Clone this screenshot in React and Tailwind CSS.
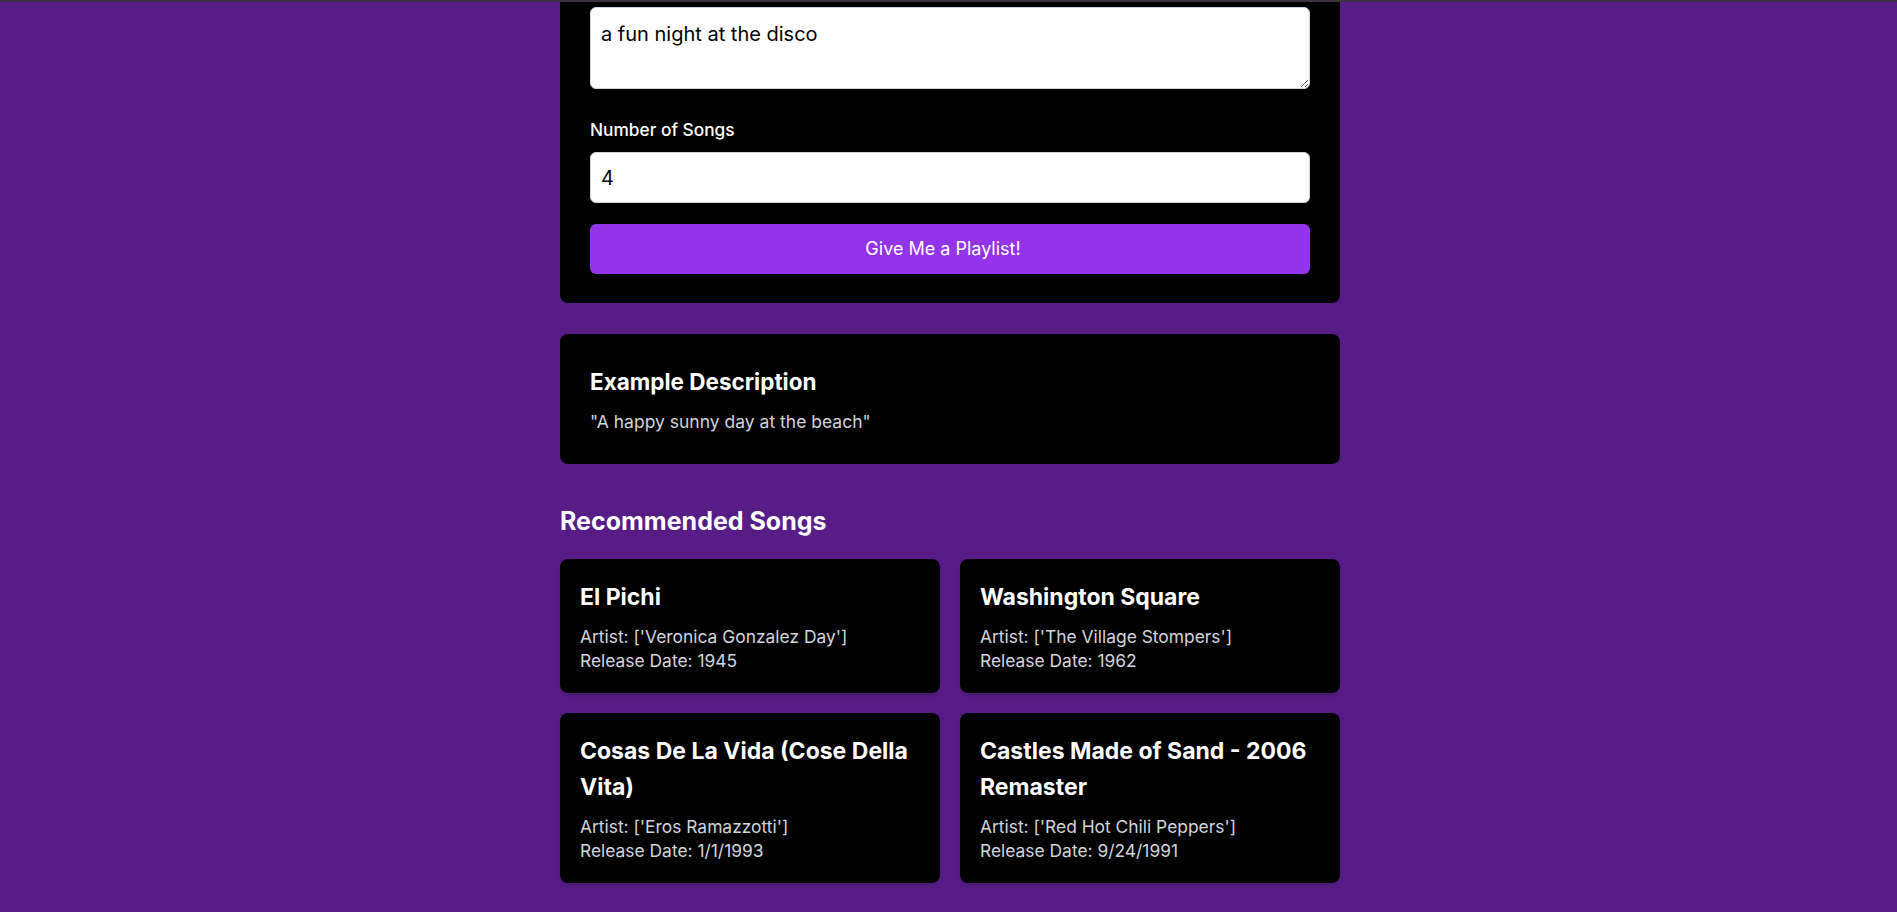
import React, { useState } from "react";

const songs = [
  { title: "El Pichi", artist: "['Veronica Gonzalez Day']", date: "1945" },
  { title: "Washington Square", artist: "['The Village Stompers']", date: "1962" },
  {
    title: "Cosas De La Vida (Cose Della Vita)",
    artist: "['Eros Ramazzotti']",
    date: "1/1/1993",
  },
  {
    title: "Castles Made of Sand - 2006 Remaster",
    artist: "['Red Hot Chili Peppers']",
    date: "9/24/1991",
  },
];

function SongCard({ song }) {
  return (
    <div className="bg-black rounded-lg p-5 shadow-md">
      <h3 className="text-white text-[23px] font-bold leading-[36px] mb-[10px]">
        {song.title}
      </h3>
      <p className="text-[#d1d5db] text-[17.4px] leading-6">Artist: {song.artist}</p>
      <p className="text-[#d1d5db] text-[17.4px] leading-6">
        Release Date: {song.date}
      </p>
    </div>
  );
}

export default function App() {
  const [description, setDescription] = useState("a fun night at the disco");
  const [count, setCount] = useState("4");

  return (
    <div className="min-h-screen bg-[#581c87] font-['Inter','Liberation_Sans',sans-serif] pb-8">
      <div className="h-[2px] bg-[#3b3340]" />
      <div className="flex justify-center pl-[3px]">
        <div className="w-[780px]">
          {/* Form */}
          <div className="bg-black rounded-b-lg px-[30px] pt-[5px] pb-[29px]">
            <textarea
              value={description}
              onChange={(e) => setDescription(e.target.value)}
              className="block w-full h-[82px] bg-white text-black text-[20px] leading-7 rounded-md border border-gray-300 pl-[10px] pr-3 pt-3 outline-none"
            />
            <label className="block mt-[29px] text-white text-[17.3px] font-medium leading-6">
              Number of Songs
            </label>
            <input
              type="text"
              value={count}
              onChange={(e) => setCount(e.target.value)}
              className="block w-full h-[51px] mt-[10px] bg-white text-black text-[20px] rounded-md border border-gray-300 px-[10px] outline-none"
            />
            <button className="block w-full h-[50px] mt-[21px] pr-[14px] bg-[#9333ea] text-white text-lg rounded-md">
              Give Me a Playlist!
            </button>
          </div>

          {/* Example */}
          <div className="bg-black rounded-lg p-[30px] mt-[31px]">
            <h2 className="text-white text-[22.5px] font-bold leading-9 mb-[10px]">
              Example Description
            </h2>
            <p className="text-[#d1d5db] text-[17.5px] leading-6">
              "A happy sunny day at the beach"
            </p>
          </div>

          {/* Results */}
          <h2 className="text-white text-[25px] font-bold leading-8 mt-[41px] mb-[22px]">
            Recommended Songs
          </h2>
          <div className="grid grid-cols-2 gap-5">
            {songs.map((song) => (
              <SongCard key={song.title} song={song} />
            ))}
          </div>
        </div>
      </div>
    </div>
  );
}
